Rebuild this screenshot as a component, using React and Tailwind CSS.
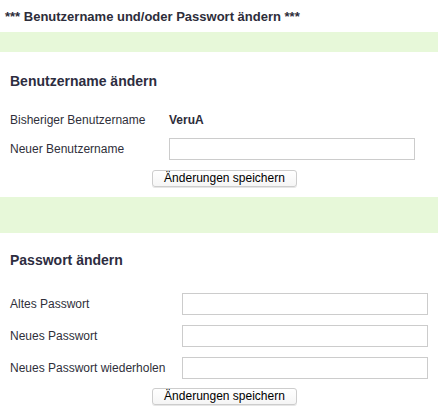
import React from "react";

const font = { fontFamily: '"Liberation Sans", Arial, sans-serif' };

const SaveButton = () => (
  <div className="flex justify-center pl-[11px]">
    <button className="h-[17px] w-[145px] rounded-[3px] border border-[#cdcdcd] bg-gradient-to-b from-white to-[#f5f5f5] text-[12px] leading-[15px] text-black shadow-[0_1px_0_#e6e6e6]">
      Änderungen speichern
    </button>
  </div>
);

const Field = ({ label, labelWidth }) => (
  <div className="flex h-[22px] items-center">
    <div className={`${labelWidth} text-[12px] text-[#2f2f3a]`}>{label}</div>
    <input className="h-[22px] w-[246px] border border-[#cccccc] bg-white outline-none" />
  </div>
);

export default function App() {
  return (
    <div className="min-h-[413px] w-[438px] bg-white" style={font}>
      <div className="h-[32px] pl-[5px] pt-[9px] text-[13px] font-bold leading-[15px] text-[#2d2d3a]">
        *** Benutzername und/oder Passwort ändern ***
      </div>
      <div className="h-[20px] bg-[#e7f8d9]" />

      {/* Benutzername */}
      <div className="pl-[10px] pt-[21px]">
        <h2 className="text-[14px] font-bold leading-[17px] text-[#2d2d3f]">Benutzername ändern</h2>
        <div className="mt-[19px] flex flex-col gap-[7px]">
          <div className="flex h-[22px] items-center">
            <div className="w-[159px] text-[12px] text-[#2f2f3a]">Bisheriger Benutzername</div>
            <div className="text-[12px] font-bold text-[#2d2d3a]">VeruA</div>
          </div>
          <Field label="Neuer Benutzername" labelWidth="w-[159px]" />
        </div>
      </div>
      <div className="mt-[10px]">
        <SaveButton />
      </div>
      <div className="mt-[10px] h-[36px] bg-[#e7f8d9]" />

      {/* Passwort */}
      <div className="pl-[10px] pt-[19px]">
        <h2 className="text-[14px] font-bold leading-[17px] text-[#2d2d3f]">Passwort ändern</h2>
        <div className="mt-[24px] flex flex-col gap-[10px]">
          <Field label="Altes Passwort" labelWidth="w-[172px]" />
          <Field label="Neues Passwort" labelWidth="w-[172px]" />
          <Field label="Neues Passwort wiederholen" labelWidth="w-[172px]" />
        </div>
      </div>
      <div className="mt-[9px]">
        <SaveButton />
      </div>
    </div>
  );
}
